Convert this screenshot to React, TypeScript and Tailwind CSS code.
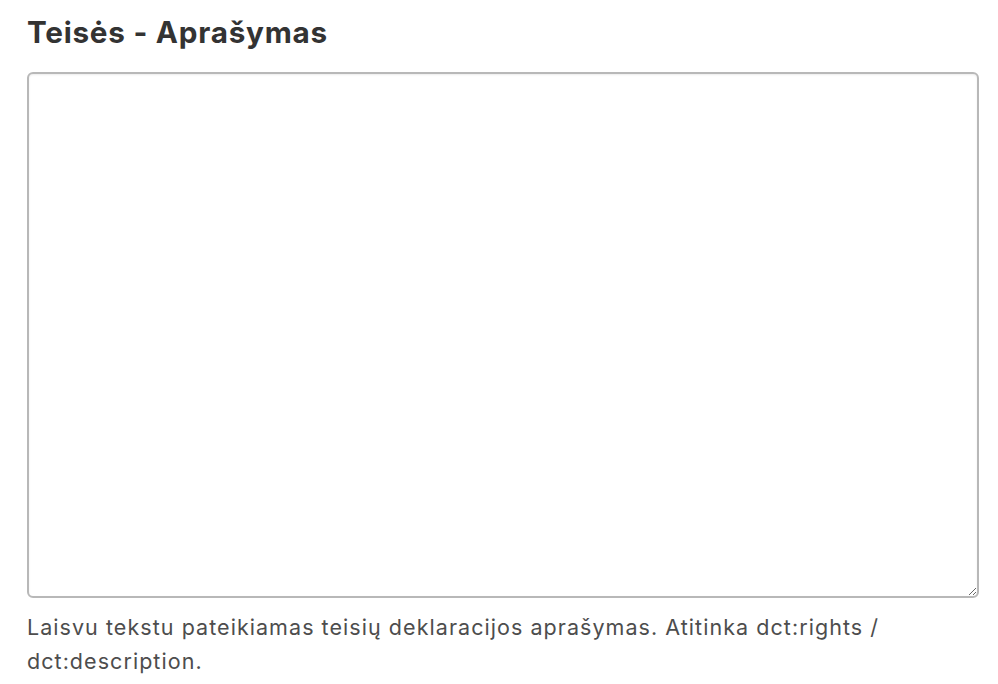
export default function App() {
  return (
    <div className="w-[998px] h-[684px] bg-white overflow-hidden" style={{ fontFamily: 'Inter, "Noto Sans", sans-serif' }}>
      <div className="pl-[27px] pr-[19px] pt-[14px]">
        <h1 className="text-[29.7px] leading-[36px] font-bold text-[#333333] tracking-[0.75px]">Teisės - Aprašymas</h1>
        <textarea
          className="mt-[22px] block w-[952px] h-[526px] rounded-[6px] border-2 border-[#b8b8b8] bg-white shadow-[inset_0_1px_2px_rgba(0,0,0,0.08)] outline-none resize-y"
        />
        <p className="mt-[12px] text-[21.5px] leading-[34px] text-[#4d4d4d] tracking-[1.05px]">
          Laisvu tekstu pateikiamas teisių deklaracijos aprašymas. Atitinka dct:rights /<br />dct:description.
        </p>
      </div>
    </div>
  );
}
